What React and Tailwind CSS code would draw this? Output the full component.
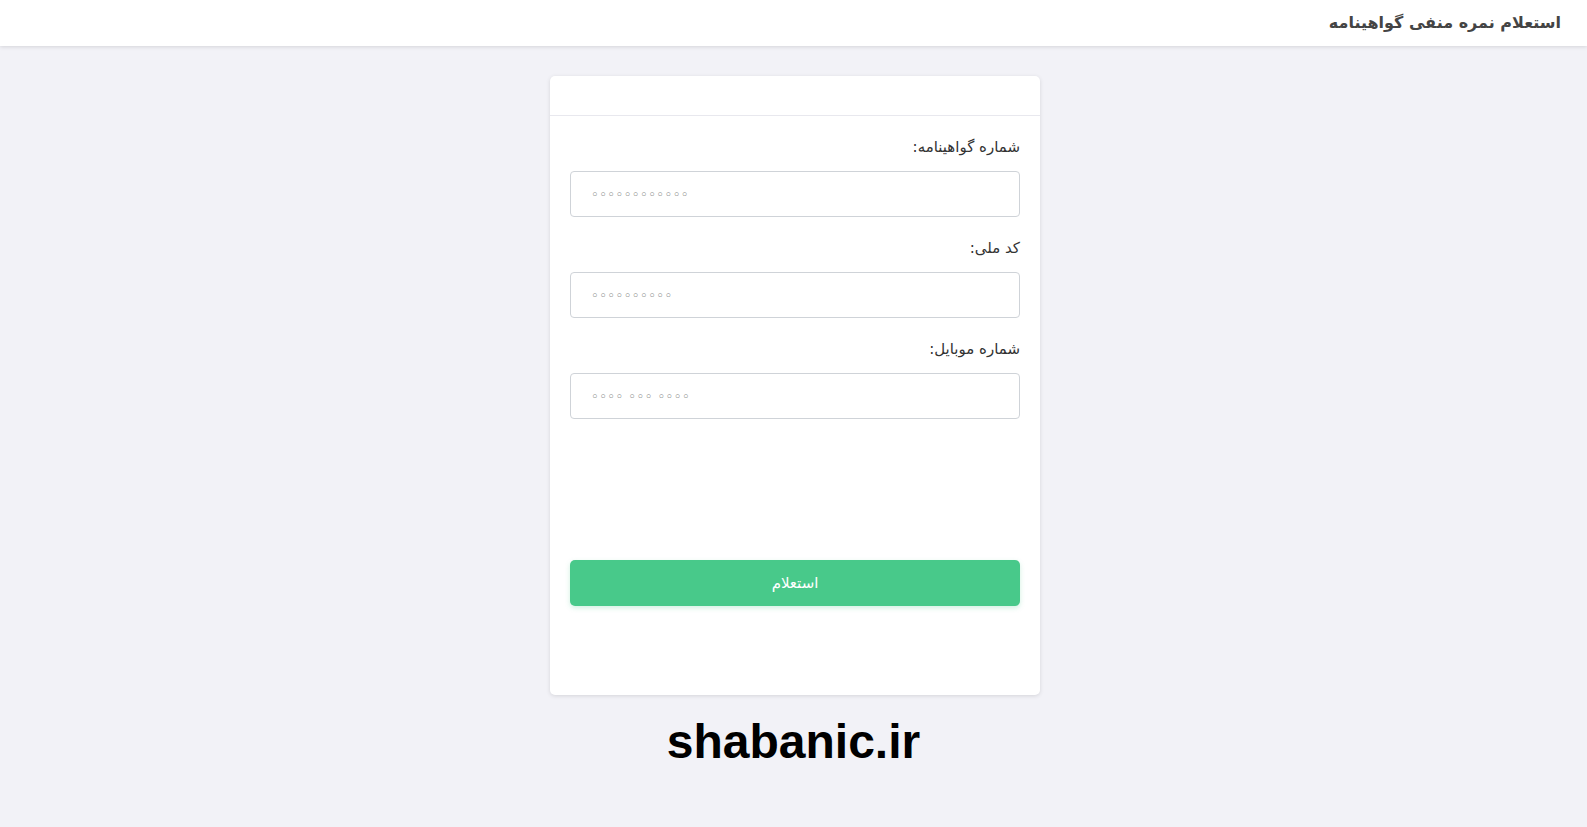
import React from 'react';

const fields = [
    { id: 'license', label: 'شماره گواهینامه:', placeholder: '◦◦◦◦◦◦◦◦◦◦◦◦' },
    { id: 'national', label: 'کد ملی:', placeholder: '◦◦◦◦◦◦◦◦◦◦' },
    { id: 'mobile', label: 'شماره موبایل:', placeholder: '◦◦◦◦ ◦◦◦ ◦◦◦◦' },
];

const App = () => {
    return (
        <div className="min-h-screen bg-[#f2f2f7] font-['DejaVu_Sans','Noto_Sans',sans-serif]">
            {/* Header */}
            <header dir="rtl" className="h-[46px] bg-white shadow-[0_1px_4px_rgba(0,0,0,0.12)] flex items-center px-[26px]">
                <h1 className="text-[16px] font-bold text-[#444] leading-none">استعلام نمره منفی گواهینامه</h1>
            </header>

            <main className="flex flex-col items-center pt-[30px]">
                <div dir="rtl" className="w-[490px] ml-[3px] bg-white rounded-[5px] shadow-[0_1px_4px_rgba(0,0,0,0.12)]">
                    <div className="h-[40px] border-b border-[#e8e8ee]"></div>
                    <form className="px-5 pt-[21px] pb-[89px]" onSubmit={(e) => e.preventDefault()}>
                        {fields.map((f) => (
                            <div key={f.id} className="mb-[21px]">
                                <label htmlFor={f.id} className="block text-[15px] text-[#333] leading-[20px] mb-[14px]">{f.label}</label>
                                <input
                                    id={f.id}
                                    dir="ltr"
                                    placeholder={f.placeholder}
                                    className="w-full h-[46px] border border-[#cfd3d8] rounded-[4px] px-5 text-[13px] tracking-[0.5px] placeholder:text-[#777] outline-none"
                                />
                            </div>
                        ))}
                        <div className="h-[120px]"></div>
                        <button type="submit" className="w-full h-[46px] rounded-[5px] bg-[#48c98a] text-white text-[15px] shadow-[0_2px_5px_rgba(72,201,138,0.25)]">
                            استعلام
                        </button>
                    </form>
                </div>

                <p className="mt-[23px] font-['Liberation_Sans',Arial,sans-serif] text-[48px] font-bold text-black leading-none">shabanic.ir</p>
            </main>
        </div>
    );
};

export default App;
